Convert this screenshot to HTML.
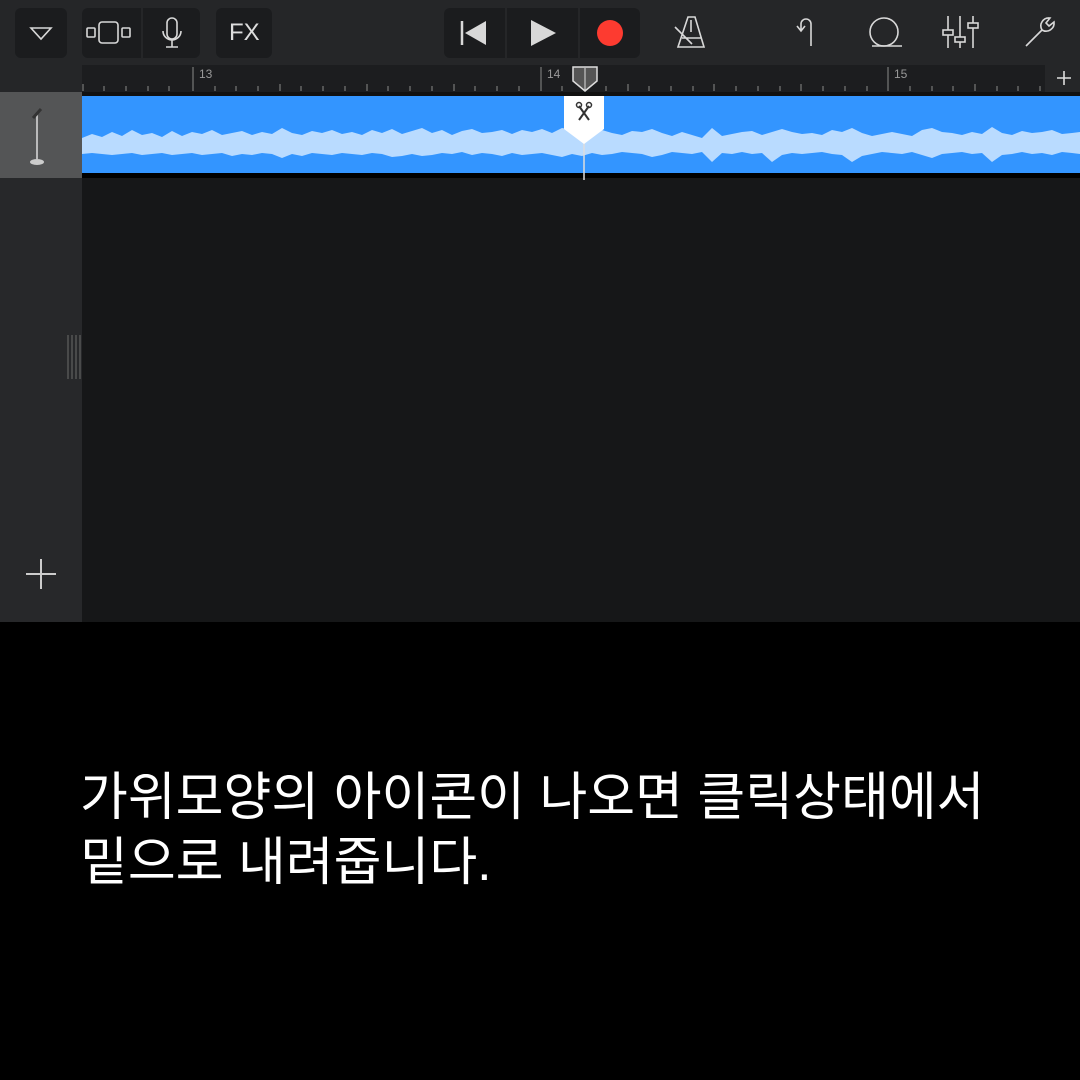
<!DOCTYPE html>
<html><head><meta charset="utf-8"><style>
body{margin:0;width:1080px;height:1080px;background:#000;overflow:hidden;position:relative;font-family:"Liberation Sans",sans-serif}
.a{position:absolute}
.btn{position:absolute;background:#1b1c1e;border-radius:6px;top:8px;height:50px}
</style></head><body>
<div class="a" style="left:0;top:0;width:1080px;height:65px;background:#252628"></div>
<div class="btn" style="left:15px;width:52px"></div>
<div class="btn" style="left:82px;width:118px"></div>
<div class="a" style="left:141px;top:8px;width:2px;height:50px;background:#252628"></div>
<div class="btn" style="left:216px;width:56px"></div>
<div class="btn" style="left:444px;width:196px"></div>
<div class="a" style="left:505px;top:8px;width:2px;height:50px;background:#252628"></div>
<div class="a" style="left:578px;top:8px;width:2px;height:50px;background:#252628"></div>
<div class="a" style="left:229px;top:19px;color:#ddd;font-size:24px">FX</div>
<svg class="a" style="left:0;top:0" width="1080" height="65" fill="none" stroke="#d8d8d8" stroke-width="1.6">
<path d="M31 28h20l-10 11z"/>
<rect x="87" y="28" width="8" height="9" rx="1"/><rect x="99" y="22" width="19" height="21" rx="3"/><rect x="122" y="28" width="8" height="9" rx="1"/>
<rect x="167" y="18" width="10" height="21" rx="5"/><path d="M163 31a9 9 0 0 0 18 0M172 40v7M166 47h12"/>
<path d="M462 21v24" stroke-width="2.5"/><path d="M465 33l21-12v24z" fill="#d8d8d8" stroke="none"/>
<path d="M531 20l25 13-25 13z" fill="#d8d8d8" stroke="none"/>
<circle cx="610" cy="33" r="13" fill="#fd3b30" stroke="none"/>
<path d="M688 17h7l9 30h-26zM682 38h20M675 27l17 17M691 20v12"/>
<path d="M811 46v-22a5 5 0 0 0-10 0v6M797 26l4 5 4-5"/>
<circle cx="884" cy="32" r="14"/><path d="M872 46h30"/>
<path d="M948 16v32M960 16v32M973 16v32"/><rect x="943" y="30" width="10" height="5" fill="#252628"/><rect x="955" y="37" width="10" height="5" fill="#252628"/><rect x="968" y="23" width="10" height="5" fill="#252628"/>
<path d="M1026 46l16-16a8 8 0 0 1 8-12l-4 5 3 3 5-4a8 8 0 0 1-12 8l-16 16z"/>
</svg>
<div class="a" style="left:0;top:65px;width:82px;height:27px;background:#252628"></div>
<div class="a" style="left:82px;top:65px;width:998px;height:27px;background:#1c1d1f"></div>
<div class="a" style="left:1045px;top:65px;width:35px;height:27px;background:#252628"></div>
<svg class="a" style="left:0;top:65px" width="1080" height="30" stroke="#8a8a8a" stroke-width="1">
<path d="M193 2v24M541 2v24M888 2v24M83 19v7M104 21v5M126 21v5M148 21v5M169 21v5M215 21v5M236 21v5M258 21v5M280 19v7M301 21v5M323 21v5M345 21v5M367 19v7M388 21v5M410 21v5M432 21v5M454 19v7M475 21v5M497 21v5M519 21v5M562 21v5M584 21v5M606 21v5M628 19v7M649 21v5M671 21v5M693 21v5M714 19v7M736 21v5M758 21v5M780 21v5M801 19v7M823 21v5M845 21v5M867 21v5M910 21v5M932 21v5M953 21v5M975 19v7M997 21v5M1018 21v5M1040 21v5"/>
<path d="M1057 13h14M1064 6v14" stroke="#ddd" stroke-width="1.6"/>
<text x="199" y="13" fill="#999" stroke="none" font-size="12">13</text>
<text x="547" y="13" fill="#999" stroke="none" font-size="12">14</text>
<text x="894" y="13" fill="#999" stroke="none" font-size="12">15</text>
</svg>
<div class="a" style="left:0;top:92px;width:1080px;height:4px;background:#111"></div>
<div class="a" style="left:0;top:92px;width:82px;height:86px;background:#545556"></div>
<div class="a" style="left:0;top:178px;width:82px;height:444px;background:#27282a"></div>
<div class="a" style="left:82px;top:178px;width:998px;height:444px;background:#161718"></div>
<div class="a" style="left:82px;top:96px;width:998px;height:77px;background:#3395ff"></div>
<svg class="a" style="left:0;top:92px" width="1080" height="530">
<path d="M37 22v45" stroke="#ddd" stroke-width="1.5"/><path d="M33 26l8-9" stroke="#333" stroke-width="3"/><ellipse cx="37" cy="70" rx="7" ry="3" fill="#ccc"/>
<polygon fill="#b9dbff" points="82,46 92,42 102,45 112,40 122,44 132,38 142,43 152,41 162,45 172,39 182,44 192,40 202,42 212,38 222,43 232,41 242,39 252,43 262,40 272,42 282,36 292,41 302,43 312,39 322,41 332,38 342,42 352,40 362,43 372,38 382,41 392,37 402,42 412,39 422,36 432,41 442,38 452,43 462,39 472,37 482,41 492,40 502,38 512,42 522,38 532,40 542,37 552,41 562,36 572,38 582,40 592,42 602,38 612,41 622,43 632,39 642,40 652,37 662,41 672,44 682,40 692,43 702,46 712,36 722,44 732,42 742,40 752,39 762,43 772,40 782,37 792,40 802,42 812,41 822,43 832,38 842,40 852,36 862,41 872,44 882,42 892,40 902,42 912,44 922,38 932,36 942,40 952,41 962,43 972,40 982,42 992,35 1002,41 1012,43 1022,39 1032,41 1042,40 1052,38 1062,42 1072,41 1080,40 1080,62 1072,61 1062,60 1052,63 1042,61 1032,62 1022,60 1012,62 1002,63 992,70 982,61 972,62 962,60 952,61 942,62 932,66 922,63 912,60 902,62 892,61 882,60 872,62 862,64 852,70 842,63 832,62 822,60 812,61 802,62 792,61 782,63 772,70 762,61 752,62 742,60 732,62 722,61 712,70 702,60 692,62 682,61 672,60 662,63 652,65 642,62 632,61 622,60 612,62 602,63 592,61 582,64 572,62 562,65 552,63 542,61 532,62 522,63 512,61 502,64 492,62 482,61 472,63 462,60 452,62 442,61 432,63 422,64 412,62 402,64 392,65 382,62 372,61 362,63 352,62 342,61 332,63 322,62 312,61 302,64 292,62 282,66 272,62 262,61 252,63 242,62 232,64 222,61 212,62 202,63 192,61 182,62 172,63 162,61 152,62 142,63 132,61 122,62 112,63 102,62 92,61 82,62"/>
<path d="M68 243v44M72 243v44M76 243v44M80 243v44" stroke="#555" stroke-width="1.5"/>
<path d="M26 482h30M41 467v30" stroke="#ccc" stroke-width="2"/>
<path d="M584 50v38" stroke="#ddd" stroke-width="1.5"/>
<path d="M564 4h40v33l-20 15-20-15z" fill="#fff"/>
<path d="M579 14l10 14M589 14l-10 14" stroke="#333" stroke-width="2"/><circle cx="579" cy="13" r="2.5" fill="none" stroke="#333" stroke-width="1.5"/><circle cx="589" cy="13" r="2.5" fill="none" stroke="#333" stroke-width="1.5"/>
</svg>
<svg class="a" style="left:570px;top:66px" width="30" height="28"><path d="M3 1h24v14l-12 10-12-10z" fill="#555" stroke="#ddd" stroke-width="1.5"/><path d="M15 2v22" stroke="#ddd"/></svg>
<div class="a" style="left:80px;top:766px;color:#fff;font-family:'Liberation Sans','Noto Sans CJK KR',sans-serif;font-weight:400;font-size:52px;line-height:65px;white-space:nowrap">가위모양의 아이콘이 나오면 클릭상태에서<br>밑으로 내려줍니다.</div>
</body></html>
